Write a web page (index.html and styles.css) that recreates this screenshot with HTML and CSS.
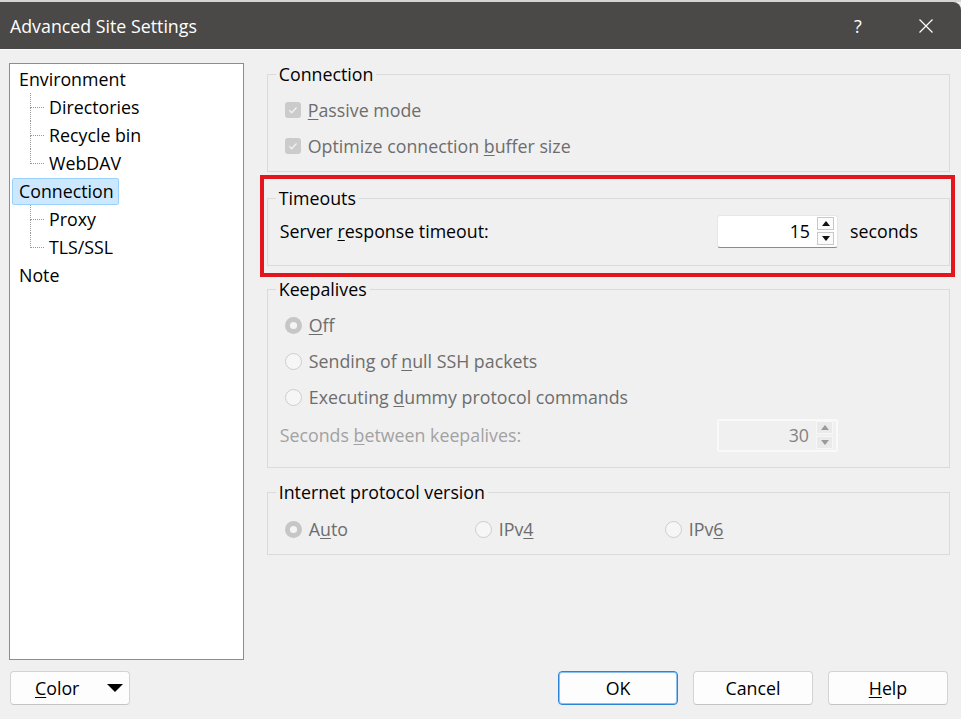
FILE: index.html
```html
<!DOCTYPE html>
<html>
<head>
<meta charset="utf-8">
<title>Advanced Site Settings</title>
<link rel="stylesheet" href="styles.css">
</head>
<body>
<div class="window">
  <div class="titlebar">
    <span class="title">Advanced Site Settings</span>
    <span class="tb-help">?</span>
    <span class="tb-close"><svg width="16" height="16" viewBox="0 0 16 16"><path d="M1.5 1.5L14.5 14.5M14.5 1.5L1.5 14.5" stroke="#ffffff" stroke-width="1.2" fill="none"/></svg></span>
  </div>
  <div class="content">
    <ul class="tree">
      <li class="node">Environment</li>
      <li class="node child">Directories</li>
      <li class="node child">Recycle bin</li>
      <li class="node child last">WebDAV</li>
      <li class="node"><span class="sel">Connection</span></li>
      <li class="node child">Proxy</li>
      <li class="node child last">TLS/SSL</li>
      <li class="node">Note</li>
    </ul>
    <div class="pane">
      <fieldset class="group g-conn">
        <legend>Connection</legend>
        <div class="opt dis">
          <svg class="cb" width="16" height="16" viewBox="0 0 16 16"><rect x="0" y="0" width="16" height="16" rx="3" fill="#cbcbcb"/><path d="M4.3 8.3l2.4 2.4 4.8-5.2" stroke="#f2f2f2" stroke-width="1.3" fill="none"/></svg>
          <span><u>P</u>assive mode</span>
        </div>
        <div class="opt dis">
          <svg class="cb" width="16" height="16" viewBox="0 0 16 16"><rect x="0" y="0" width="16" height="16" rx="3" fill="#cbcbcb"/><path d="M4.3 8.3l2.4 2.4 4.8-5.2" stroke="#f2f2f2" stroke-width="1.3" fill="none"/></svg>
          <span>Optimize connection <u>b</u>uffer size</span>
        </div>
      </fieldset>
      <div class="highlight">
        <fieldset class="group g-timeouts">
          <legend>Timeouts</legend>
          <div class="field-row">
            <span>Server <u>r</u>esponse timeout:</span>
            <div class="spin">
              <span class="val">15</span>
              <span class="spin-btns">
                <span class="sbtn"><span class="tri up"></span></span>
                <span class="sbtn"><span class="tri down"></span></span>
              </span>
            </div>
            <span class="unit">seconds</span>
          </div>
        </fieldset>
      </div>
      <fieldset class="group g-keep">
        <legend>Keepalives</legend>
        <div class="opt dis">
          <svg class="rb" width="17" height="17" viewBox="0 0 17 17"><circle cx="8.5" cy="8.5" r="8.5" fill="#c6c6c6"/><circle cx="8.5" cy="8.5" r="3.6" fill="#f4f4f4"/></svg>
          <span><u>O</u>ff</span>
        </div>
        <div class="opt dis">
          <svg class="rb" width="17" height="17" viewBox="0 0 17 17"><circle cx="8.5" cy="8.5" r="8" fill="#f6f6f6" stroke="#cdcdcd" stroke-width="1"/></svg>
          <span>Sending of <u>n</u>ull SSH packets</span>
        </div>
        <div class="opt dis">
          <svg class="rb" width="17" height="17" viewBox="0 0 17 17"><circle cx="8.5" cy="8.5" r="8" fill="#f6f6f6" stroke="#cdcdcd" stroke-width="1"/></svg>
          <span>Executing <u>d</u>ummy protocol commands</span>
        </div>
        <div class="field-row faint">
          <span>Seconds <u>b</u>etween keepalives:</span>
          <div class="spin spin-dis">
            <span class="val">30</span>
            <span class="spin-btns">
              <span class="sbtn"><span class="tri up"></span></span>
              <span class="sbtn"><span class="tri down"></span></span>
            </span>
          </div>
          <span class="unit"></span>
        </div>
      </fieldset>
      <fieldset class="group g-ip">
        <legend>Internet protocol version</legend>
        <div class="radio-grid">
          <div class="opt dis">
            <svg class="rb" width="17" height="17" viewBox="0 0 17 17"><circle cx="8.5" cy="8.5" r="8.5" fill="#c6c6c6"/><circle cx="8.5" cy="8.5" r="3.6" fill="#f4f4f4"/></svg>
            <span>A<u>u</u>to</span>
          </div>
          <div class="opt dis">
            <svg class="rb" width="17" height="17" viewBox="0 0 17 17"><circle cx="8.5" cy="8.5" r="8" fill="#f6f6f6" stroke="#cdcdcd" stroke-width="1"/></svg>
            <span>IPv<u>4</u></span>
          </div>
          <div class="opt dis">
            <svg class="rb" width="17" height="17" viewBox="0 0 17 17"><circle cx="8.5" cy="8.5" r="8" fill="#f6f6f6" stroke="#cdcdcd" stroke-width="1"/></svg>
            <span>IPv<u>6</u></span>
          </div>
        </div>
      </fieldset>
    </div>
  </div>
  <div class="footer">
    <button class="btn btn-color"><span><u>C</u>olor</span><span class="caret"></span></button>
    <div class="actions">
      <button class="btn btn-default">OK</button>
      <button class="btn">Cancel</button>
      <button class="btn"><u>H</u>elp</button>
    </div>
  </div>
</div>
</body>
</html>
```
FILE: styles.css
```css
html, body {
  margin: 0;
  padding: 0;
  background: #f0f0f0;
}
body {
  font-family: "Open Sans", "Noto Sans", sans-serif;
  font-size: 17.8px;
  color: #000;
}
u {
  text-decoration: underline;
  text-underline-offset: 2px;
  text-decoration-thickness: 1px;
}
.window {
  width: 961px;
  height: 719px;
  border-top: 2px solid #d4d4d4;
  box-sizing: border-box;
}
.titlebar {
  height: 47px;
  background: #4a4947;
  border-top-right-radius: 8px;
  border-bottom: 1px solid #f9f9f9;
  display: flex;
  align-items: center;
  color: #fff;
  padding-left: 10px;
  padding-right: 10px;
}
.title {
  flex: 1;
  font-size: 17.8px;
}
.tb-help {
  width: 50px;
  margin-left: 2px;
  text-align: center;
  font-size: 18px;
}
.tb-close {
  width: 50px;
  margin-left: 18px;
  display: flex;
  justify-content: center;
  align-items: center;
}
.content {
  display: flex;
  gap: 23px;
  padding: 13px 11px 0 9px;
}
.tree {
  width: 235px;
  height: 597px;
  box-sizing: border-box;
  margin: 0;
  padding: 1px 0 0 0;
  list-style: none;
  background: #fff;
  border: 1px solid #8a8d93;
}
.node {
  height: 28px;
  line-height: 28px;
  padding-left: 9px;
  position: relative;
  white-space: nowrap;
}
.child {
  padding-left: 39px;
}
.child::before {
  content: "";
  position: absolute;
  left: 20px;
  top: 0;
  width: 13px;
  height: 14px;
  border-left: 1px dotted #9a9a9a;
  border-bottom: 1px dotted #9a9a9a;
}
.child:not(.last)::after {
  content: "";
  position: absolute;
  left: 20px;
  top: 14px;
  bottom: 0;
  border-left: 1px dotted #9a9a9a;
}
.sel {
  display: inline-block;
  vertical-align: top;
  box-sizing: border-box;
  height: 27px;
  line-height: 25px;
  margin-top: 1px;
  margin-left: -7px;
  padding: 0 4px 0 6px;
  background: #cce8ff;
  border: 1px solid #99d1ff;
  border-radius: 2px;
}
.pane {
  width: 684px;
  display: flex;
  flex-direction: column;
}
.group {
  margin: 0;
  min-width: 0;
  border: 1px solid #dadada;
  padding: 7px 0 7px 0;
}
.group legend {
  padding: 0 3px;
  margin-left: 8px;
  line-height: 22px;
}
.opt {
  height: 36px;
  display: flex;
  align-items: center;
  gap: 7px;
  padding-left: 17px;
  white-space: nowrap;
}
.opt svg {
  flex: none;
}
.dis {
  color: #6d6d6d;
}
.highlight {
  margin: 3px -5px 0 -7px;
  border: 4px solid #e3161d;
  padding: 8px 1px 7px 3px;
}
.g-timeouts {
  padding-top: 5px;
  padding-bottom: 17px;
}
.field-row {
  display: grid;
  grid-template-columns: 1fr 121px 111px;
  align-items: center;
  height: 34px;
  padding-left: 12px;
}
.unit {
  padding-left: 12px;
}
.faint {
  color: #a2a2a2;
  margin-top: 3px;
}
.spin {
  box-sizing: border-box;
  height: 33px;
  background: #fff;
  border: 1px solid #e6e6e6;
  border-bottom: 1px solid #8b8b8b;
  border-radius: 3px;
  display: flex;
  align-items: center;
  justify-content: flex-end;
  padding-right: 3px;
}
.val {
  padding-right: 7px;
}
.spin-btns {
  display: flex;
  flex-direction: column;
  gap: 2px;
}
.sbtn {
  width: 17px;
  height: 13px;
  box-sizing: border-box;
  border: 1px solid #c9c9c9;
  background: #fbfbfb;
  display: flex;
  align-items: center;
  justify-content: center;
}
.tri {
  width: 0;
  height: 0;
  border-left: 4px solid transparent;
  border-right: 4px solid transparent;
}
.tri.up {
  border-bottom: 5px solid #111;
}
.tri.down {
  border-top: 5px solid #111;
}
.spin-dis {
  background: #f0f0f0;
  border: 2px solid #f9f9f9;
  border-radius: 2px;
}
.spin-dis .val {
  color: #838383;
}
.spin-dis .sbtn {
  border-color: #f7f7f7;
  background: #eaeaea;
}
.spin-dis .tri.up {
  border-bottom-color: #9a9a9a;
}
.spin-dis .tri.down {
  border-top-color: #9a9a9a;
}
.g-keep {
  margin-top: 1px;
  padding-bottom: 15px;
}
.g-ip {
  margin-top: 13px;
  padding-top: 8px;
  padding-bottom: 7px;
}
.radio-grid {
  display: grid;
  grid-template-columns: 190px 190px 1fr;
}
.footer {
  display: flex;
  align-items: center;
  margin-top: 11px;
  padding: 0 13px 0 10px;
}
.btn {
  box-sizing: border-box;
  width: 120px;
  height: 34px;
  font-family: inherit;
  font-size: 17.8px;
  color: #000;
  background: #fdfdfd;
  border: 1px solid #d3d3d3;
  border-bottom-color: #c4c4c4;
  border-radius: 4px;
  padding: 0;
}
.btn-default {
  border: 1px solid #2b84d6;
  box-shadow: inset 0 0 0 1px #8cc0ee;
}
.btn-color {
  display: flex;
  align-items: center;
  padding: 0 6px 0 24px;
}
.caret {
  margin-left: auto;
  width: 0;
  height: 0;
  border-left: 8px solid transparent;
  border-right: 8px solid transparent;
  border-top: 8px solid #000;
}
.actions {
  margin-left: auto;
  display: flex;
  gap: 15px;
}
```
